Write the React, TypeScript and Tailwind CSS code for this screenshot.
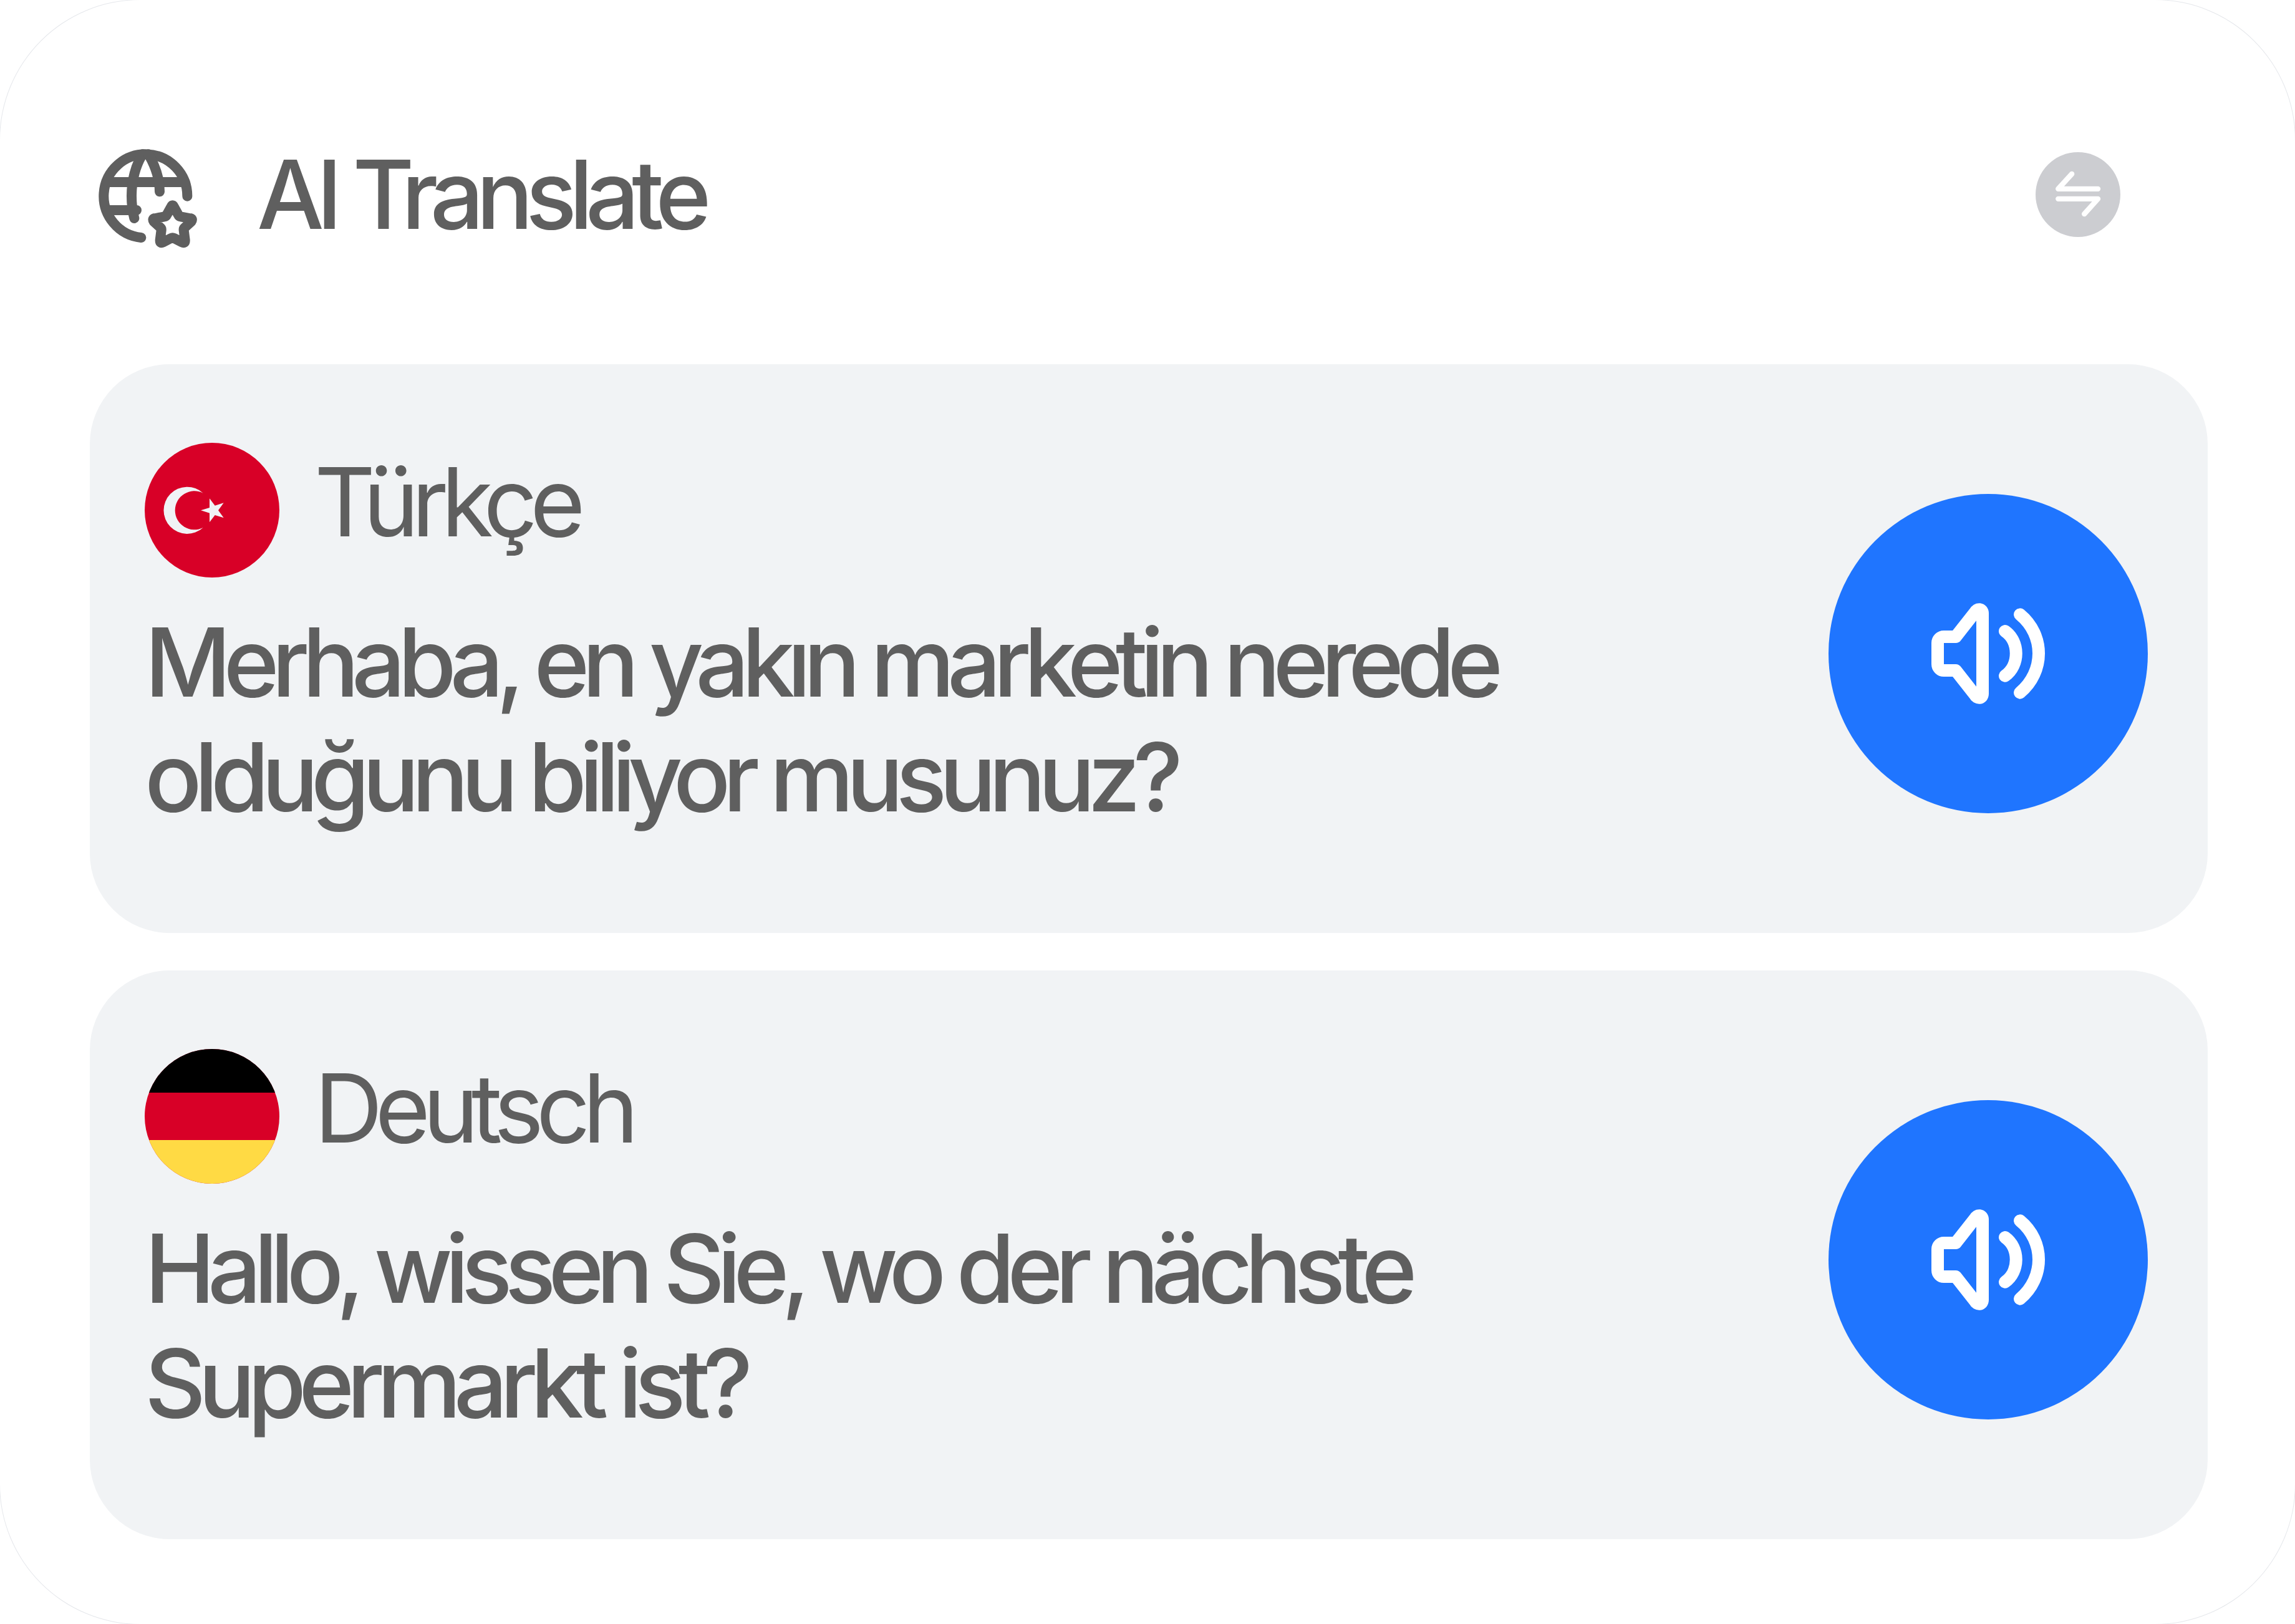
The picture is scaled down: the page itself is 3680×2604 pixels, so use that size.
import type { ReactNode } from "react";

interface TranslationProps {
  id: string;
  language: string;
  lang: string;
  text: string;
  flag: ReactNode;
}

const GlobeStarIcon = ({ className }: { className?: string }) => (
  <svg
    className={className}
    viewBox="54 42 528 528"
    fill="none"
    stroke="currentColor"
    strokeWidth={48}
    strokeLinecap="round"
    strokeLinejoin="round"
    aria-hidden="true"
  >
    <path d="M511 314A201 201 0 1 0 289 513" />
    <path d="M125 246H500M125 381H267" />
    <path d="M296 112C262 165 243 240 243 312C243 350 247 386 256 420" />
    <path d="M324 112C355 165 378 230 378 292" />
    <path d="M446 364Q440 352 434 364L412 404Q409 411 401 412L358 420Q340 420 350 436L383 466Q387 470 386 478L380 525Q379 543 395 535L432 516Q440 512 448 516L485 535Q501 543 500 525L494 478Q493 470 497 466L530 436Q540 420 522 420L479 412Q471 411 468 404Z" />
  </svg>
);

const SwapIcon = ({ className }: { className?: string }) => (
  <svg
    className={className}
    viewBox="101 71 409 409"
    fill="none"
    stroke="currentColor"
    strokeWidth={25}
    strokeLinecap="round"
    strokeLinejoin="round"
    aria-hidden="true"
  >
    <path d="M276 176L210 248H402" />
    <path d="M210 296H402L336 369" />
  </svg>
);

const SpeakerIcon = ({ className }: { className?: string }) => (
  <svg
    className={className}
    viewBox="111 111 546 486"
    fill="none"
    stroke="currentColor"
    strokeWidth={60}
    strokeLinecap="round"
    strokeLinejoin="round"
    aria-hidden="true"
  >
    <path d="M171 273H228L319 157C331 134 357 138 357 161V547C357 570 331 574 319 551L228 435H171A30 30 0 0 1 141 405V303A30 30 0 0 1 171 273Z" />
    <path d="M465 246C536 296 536 410 465 461" />
    <path d="M537 166C657 265 657 441 537 542" />
  </svg>
);

const TurkishFlag = () => (
  <svg className="size-[216px] rounded-full bg-[#d80027]" viewBox="66 53 648 648" aria-hidden="true">
    <g fill="#f0f2f5">
      <path d="M347 295A113 113 0 1 0 347 461A93 93 0 1 1 347 295Z" />
      <path d="M336 378L378 365V321L404 355L446 342L420 378L446 414L404 401L378 435V391Z" />
    </g>
  </svg>
);

const GermanFlag = () => (
  <svg className="size-[216px] rounded-full bg-[#d80027]" viewBox="0 0 216 216" aria-hidden="true">
    <path fill="#000" d="M0 0H216V70H0Z" />
    <path fill="#ffda44" d="M0 146H216V216H0Z" />
  </svg>
);

const translations: TranslationProps[] = [
  {
    id: "source",
    language: "Türkçe",
    lang: "tr",
    text: "Merhaba, en yakın marketin nerede olduğunu biliyor musunuz?",
    flag: <TurkishFlag />,
  },
  {
    id: "target",
    language: "Deutsch",
    lang: "de",
    text: "Hallo, wissen Sie, wo der nächste Supermarkt ist?",
    flag: <GermanFlag />,
  },
];

const TranslationCard = ({ id, language, lang, text, flag }: TranslationProps) => (
  <section
    className="flex items-start justify-between rounded-[128px] bg-[#f1f3f5] pt-[126px] pr-24 pb-[158px] pl-[88px]"
    aria-labelledby={id}
  >
    <div className="flex flex-col gap-11">
      <div className="flex items-start gap-14">
        {flag}
        <h2 id={id} lang={lang} className="text-[152px] leading-[190px] font-normal tracking-[-0.08em]">
          {language}
        </h2>
      </div>
      <p lang={lang} className="max-w-[2300px] text-[152px] leading-[184px] font-medium tracking-[-0.08em]">
        {text}
      </p>
    </div>
    <button
      type="button"
      aria-label={`Listen in ${language}`}
      className="mt-[82px] flex size-[512px] shrink-0 cursor-pointer items-center justify-center rounded-full bg-[#1f75ff] text-white"
    >
      <SpeakerIcon className="h-[162px] w-[182px]" />
    </button>
  </section>
);

const App = () => {
  return (
    <main className="min-h-screen rounded-[225px] bg-white pt-[224px] pr-[140px] pb-[136px] pl-36 font-['Inter','Liberation_Sans',sans-serif] text-[#5f5f5f] ring-1 ring-gray-200">
      <header className="flex items-center justify-between pr-[140px] pl-1">
        <div className="flex items-center gap-[88px]">
          <GlobeStarIcon className="size-44" />
          <h1 className="text-[152px] leading-[176px] font-medium tracking-[-0.08em]">AI Translate</h1>
        </div>
        <button
          type="button"
          aria-label="Swap languages"
          className="size-[136px] cursor-pointer rounded-full bg-[#cccdd1] text-white"
        >
          <SwapIcon className="size-full" />
        </button>
      </header>
      <div className="mt-[184px] flex flex-col gap-[60px]">
        {translations.map((item) => (
          <TranslationCard key={item.id} {...item} />
        ))}
      </div>
    </main>
  );
};

export default App;
